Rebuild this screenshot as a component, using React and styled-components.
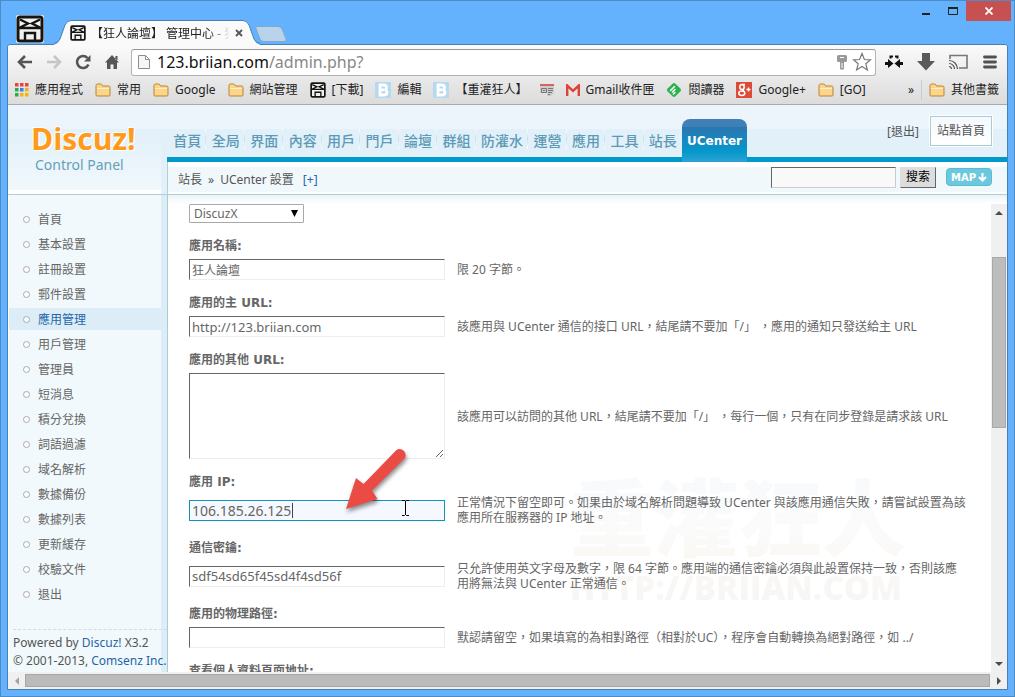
import styled, { createGlobalStyle } from "styled-components";

const GlobalStyle = createGlobalStyle`
  *, *::before, *::after {
    box-sizing: border-box;
  }
  body {
    margin: 0;
    font-family: "Noto Sans", "Noto Sans CJK TC", sans-serif;
    font-size: 12px;
    color: #555;
  }
  button, input, select, textarea {
    font: inherit;
    color: inherit;
    margin: 0;
  }
  a {
    color: inherit;
    text-decoration: none;
  }
`;

/* ---------- window ---------- */

const Window = styled.div`
  position: relative;
  height: 100vh;
  display: flex;
  flex-direction: column;
  background: #64b1fd;
  border: 1px solid #4c8bc4;
  overflow: hidden;
`;

const TitleBar = styled.div`
  flex: 0 0 43px;
  display: flex;
  align-items: flex-end;
  padding: 0 3px 0 15px;
`;

const Profile = styled.button`
  width: 28px;
  height: 28px;
  margin-bottom: 1px;
  padding: 0;
  border: none;
  background: none;
  & svg {
    display: block;
  }
`;

const Tab = styled.div`
  position: relative;
  z-index: 1;
  width: 206px;
  height: 25px;
  margin: 0 0 -1px 10px;
  padding: 0 17px 0 16px;
  display: flex;
  align-items: center;
  gap: 5px;
  color: #222;
  & > * {
    position: relative;
    flex-shrink: 0;
  }
`;

const TabShape = styled.svg`
  && {
    position: absolute;
  }
  left: 0;
  top: 0;
`;

const TabTitle = styled.span`
  && {
    flex: 1 1 0;
  }
  overflow: hidden;
  white-space: nowrap;
  mask-image: linear-gradient(to right, #000 85%, transparent);
`;

const PlainButton = styled.button`
  display: flex;
  align-items: center;
  justify-content: center;
  padding: 0;
  border: none;
  background: none;
`;

const NewTab = styled(PlainButton)`
  margin: 0 0 2px -5px;
`;

const WindowButtons = styled.div`
  margin-left: auto;
  align-self: flex-start;
  display: flex;
`;

const WindowButton = styled(PlainButton)`
  width: ${({ $close }) => ($close ? 45 : 27)}px;
  height: 20px;
  background: ${({ $close }) => ($close ? "#c75050" : "none")};
`;

const Browser = styled.div`
  flex: 1;
  min-height: 0;
  margin: 0 6px 6px;
  display: flex;
  flex-direction: column;
  border: 1px solid #4781b0;
  border-radius: 3px 3px 0 0;
  background: #fff;
`;

/* ---------- toolbar ---------- */

const Toolbar = styled.div`
  flex: 0 0 34px;
  display: flex;
  align-items: center;
  padding: 0 7px 0 8px;
  background: linear-gradient(#fafafa, #e9e9e9);
  border-radius: 3px 3px 0 0;
`;

const NavButtons = styled.div`
  display: flex;
  gap: 11px;
  margin-right: 10px;
`;

const IconButton = styled(PlainButton)`
  width: 18px;
  height: 20px;
`;

const Address = styled.label`
  flex: 1;
  height: 27px;
  display: flex;
  align-items: center;
  gap: 5px;
  padding: 0 3px 0 6px;
  background: #fff;
  border: 1px solid #b3b3b3;
  border-top-color: #999;
  border-radius: 3px;
`;

const AddressText = styled.span`
  flex: 1;
  margin-left: 2px;
  font-size: 16px;
  line-height: 24px;
  color: #888;
  & b {
    font-weight: 400;
    color: #111;
  }
`;

const Extensions = styled.div`
  display: flex;
  gap: 12px;
  margin-left: 8px;
`;

const ExtensionButton = styled(PlainButton)`
  width: 20px;
  height: 22px;
`;

const Bookmarks = styled.div`
  flex: 0 0 26px;
  display: flex;
  align-items: center;
  gap: 12px;
  padding: 0 8px 4px 7px;
  white-space: nowrap;
  background: linear-gradient(#e8e8e8, #dcdcdc);
  border-bottom: 1px solid #a9a9a9;
  color: #222;
`;

const Bookmark = styled.a`
  display: flex;
  align-items: center;
  gap: 6px;
  line-height: 16px;
`;

const BookmarkEnd = styled.div`
  margin-left: auto;
  display: flex;
  align-items: center;
  gap: 7px;
`;

const Divider = styled.span`
  width: 1px;
  height: 20px;
  background: #c4cdd6;
`;

/* ---------- page header ---------- */

const Header = styled.header`
  flex: 0 0 90px;
  display: flex;
  background: linear-gradient(#edf5fc 24px, #e2f0fa 24px);
  border-bottom: 1px solid #b1cfd6;
`;

const Logo = styled.a`
  flex: 0 0 153px;
  display: flex;
  flex-direction: column;
  padding: 16px 0 0 23px;
  background: linear-gradient(#edf5fc 24px, #e2f0fa 24px, #f0f8fc 85px, #fff 85px);
`;

const LogoName = styled.span`
  font-family: "Open Sans", sans-serif;
  font-size: 30px;
  font-weight: 700;
  line-height: 36px;
  color: #ff9a1a;
  text-shadow: 1px 1px 0 #fff, -1px -1px 0 #fff;
`;

const LogoCaption = styled.span`
  padding-left: 4px;
  font-size: 14px;
  line-height: 16px;
  color: #669fb8;
`;

const HeaderMain = styled.div`
  flex: 1;
  min-width: 0;
  display: flex;
  flex-direction: column;
`;

const NavRow = styled.div`
  flex: 0 0 57px;
  display: flex;
  align-items: flex-end;
  margin-left: 6px;
  border-bottom: 5px solid #0099cc;
`;

const NavList = styled.nav`
  flex: 0 1 514px;
  display: flex;
  margin-left: 1px;
`;

const NavLink = styled.a`
  flex: 1 0 auto;
  height: 25px;
  margin-bottom: 3px;
  text-align: center;
  font-size: 14px;
  line-height: 23px;
  font-weight: 500;
  color: #5c9ab5;
  background: linear-gradient(#fff, #c9dfeb, #fff) right 0 top 0 / 1px 20px no-repeat;
  &:last-child {
    background: none;
  }
`;

const CurrentTab = styled.a`
  width: 65px;
  height: 43px;
  margin-bottom: -5px;
  text-align: center;
  font-family: "DejaVu Sans", sans-serif;
  font-weight: 700;
  line-height: 45px;
  color: #fff;
  border-radius: 8px 8px 0 0;
  background: linear-gradient(#3f80b8 8px, #2b76b0 8px, #0597cb 32px, #2ca4d3);
`;

const Account = styled.div`
  align-self: flex-start;
  margin: 11px 15px 0 auto;
  display: flex;
  align-items: center;
  gap: 11px;
`;

const SiteLink = styled.a`
  padding: 0 6px;
  line-height: 28px;
  border: 1px solid #a9ccd6;
  background: linear-gradient(#f4f9fd, #fff);
  outline: 1px solid #fff;
`;

const CrumbBar = styled.div`
  flex: 1;
  margin-left: 6px;
  display: flex;
  align-items: center;
  padding: 0 15px 2px 10px;
  border-left: 1px solid #b1cfd6;
  background: linear-gradient(#fff 5px, #f1f8fc 5px, #f1f8fc 30px, #fff 30px);
`;

const Crumbs = styled.span`
  flex: 1;
  display: flex;
  gap: 6px;
  padding-top: 6px;
  line-height: 16px;
  & a {
    margin-left: 3px;
    color: #2366a8;
  }
`;

const SearchInput = styled.input`
  width: 125px;
  height: 21px;
  margin-right: 4px;
  border: 1px solid;
  border-color: #666 #ccc #ccc #666;
  background: #f9f9f9;
`;

const SearchButton = styled.button`
  height: 21px;
  padding: 0 5px;
  margin-right: 10px;
  line-height: 18px;
  color: #000;
  background: #ddd;
  border: 1px solid;
  border-color: #ddd #666 #666 #ddd;
`;

const MapButton = styled.button`
  height: 18px;
  width: 46px;
  padding: 0;
  display: flex;
  align-items: center;
  justify-content: center;
  gap: 2px;
  font-family: "DejaVu Sans", sans-serif;
  font-size: 10px;
  font-weight: 700;
  color: #fff;
  background: #6cc8dc;
  border: 1px solid #58bcd2;
  border-radius: 4px;
`;

/* ---------- page body ---------- */

const Body = styled.div`
  flex: 1;
  min-height: 0;
  display: flex;
`;

const Sidebar = styled.aside`
  flex: 0 0 160px;
  overflow: hidden;
  white-space: nowrap;
  padding-top: 13px;
  border-left: 1px solid #fff;
  border-right: 1px solid #a9ced2;
  background: linear-gradient(to right, #f1f9fc 152px, #dcedf8 152px);
`;

const MenuLink = styled.a`
  display: flex;
  align-items: center;
  gap: 8px;
  height: 22px;
  margin-bottom: 3px;
  padding-left: 14px;
  color: ${({ $active }) => ($active ? "#2366a8" : "#666")};
  background: ${({ $active }) => ($active ? "#dcedf8" : "none")};
  &::before {
    content: "";
    width: 7px;
    height: 7px;
    border: 1px solid #aaa;
    border-radius: 50%;
    background: #fff;
  }
`;

const Copyright = styled.footer`
  margin: 24px 0 0 4px;
  padding-top: 4px;
  line-height: 18px;
  color: #555;
  border-top: 1px dashed #d3dbdf;
  & p {
    margin: 0;
  }
  & a {
    color: #2366a8;
  }
`;

const Main = styled.main`
  position: relative;
  flex: 1;
  min-width: 0;
  display: flex;
  flex-direction: column;
  padding-top: 9px;
  background: linear-gradient(#eaf4f9, #fff 9px);
`;

const Frame = styled.div`
  position: relative;
  flex: 1;
  min-height: 0;
  display: flex;
`;

const Form = styled.form`
  position: relative;
  z-index: 1;
  flex: 1;
  min-width: 0;
  overflow: hidden;
  padding-left: 21px;
`;

const AppType = styled.select`
  display: block;
  width: 115px;
  height: 19px;
  padding: 0 4px;
  line-height: 16px;
  color: #666;
  appearance: none;
  border: 1px solid #a9a9a9;
  border-radius: 1px;
  background: #fff;
`;

const SelectBox = styled.div`
  position: relative;
  width: 115px;
  & svg {
    position: absolute;
    right: 6px;
    top: 6px;
    pointer-events: none;
  }
`;

const FieldLabel = styled.label`
  display: block;
  padding: 15px 0 5px;
  line-height: 16px;
  font-family: "DejaVu Sans", "Noto Sans CJK TC", sans-serif;
  font-weight: 700;
  color: #666;
`;

const FieldRow = styled.div`
  display: flex;
  align-items: center;
  gap: 12px;
`;

const TextInput = styled.input`
  flex: 0 0 256px;
  width: 256px;
  height: 21px;
  padding: 0 2px;
  font-size: ${({ $size }) => $size}px;
  color: #666;
  border: 1px solid;
  border-color: #666 #ededed #ededed #666;
  background: #fff;
  outline: none;
`;

const FocusedInput = styled(TextInput)`
  border-color: #0f93c0;
  background: #f5f9ff;
`;

const TextBox = styled.textarea`
  flex: 0 0 256px;
  width: 256px;
  height: 86px;
  display: block;
  border: 1px solid;
  border-color: #666 #ededed #ededed #666;
  outline: none;
`;

const Hint = styled.p`
  margin: 0;
  line-height: 15px;
  white-space: pre-line;
  color: #666;
`;

const Watermark = styled.div`
  position: absolute;
  left: 402px;
  top: 264px;
  display: flex;
  flex-direction: column;
  pointer-events: none;
  font-weight: 900;
  white-space: nowrap;
  color: transparent;
  background: linear-gradient(#f7f9fc, #fbfbfb 45%, #fbf8f3 65%, #f6f6f6);
  background-clip: text;
  & b {
    font-size: 84px;
    line-height: 100px;
    font-weight: 900;
  }
  & i {
    font-family: "Open Sans", sans-serif;
    font-style: normal;
    font-weight: 800;
    font-size: 33px;
    line-height: 40px;
  }
`;

/* ---------- scrollbars ---------- */

const ScrollBar = styled.div`
  flex: 0 0 ${({ $vertical }) => ($vertical ? 16 : 17)}px;
  display: flex;
  flex-direction: ${({ $vertical }) => ($vertical ? "column" : "row")};
  background: #f0f0f0;
  & svg {
    display: block;
  }
`;

const ScrollArrow = styled(PlainButton)`
  flex: 0 0 17px;
`;

const VerticalTrack = styled.div`
  flex: 1;
  padding: 36px 0 0 1px;
`;

const VerticalThumb = styled.div`
  height: 43%;
  margin-right: 1px;
  background: #bdbdbd;
  border: 1px solid #a8a8a8;
`;

const HorizontalThumb = styled.div`
  flex: 1;
  margin: 2px 0;
  background: #bbb;
  border: 1px solid #a6a6a6;
`;

/* ---------- overlays ---------- */

const RedArrow = styled.svg`
  position: absolute;
  z-index: 2;
  left: 336px;
  top: 438px;
  pointer-events: none;
  filter: drop-shadow(1px 3px 2px rgba(0, 0, 0, 0.45));
`;

const Pointer = styled.svg`
  position: absolute;
  z-index: 2;
  left: 400px;
  top: 498px;
  pointer-events: none;
`;

const Caret = styled.span`
  position: absolute;
  left: 103px;
  top: 3px;
  width: 1px;
  height: 15px;
  background: #444;
`;

const CaretBox = styled.div`
  position: relative;
  display: flex;
`;

/* ---------- icons ---------- */

function FaceIcon({ size = 16 }) {
  return (
    <svg width={size} height={size} viewBox="0 0 28 28">
      <rect width="28" height="28" rx="2" fill="#f3f1ee" />
      <rect x="2" y="2" width="24" height="24" rx="2" fill="none" stroke="#151515" strokeWidth="3" />
      <path
        d="M4 4.500L12 8.500L4 12.500M24 4.500L16 8.500L24 12.500M3 13H25M9 26V18H19V26"
        fill="none"
        stroke="#151515"
        strokeWidth="2.400"
      />
    </svg>
  );
}

function FolderIcon() {
  return (
    <svg width="16" height="14" viewBox="0 0 16 14">
      <path
        d="M1 12V2.500Q1 1 2.500 1H5.500Q6.500 1 7 2L7.500 3H13.500Q15 3 15 4.500V12Q15 13 14 13H2Q1 13 1 12Z"
        fill="#fcd58a"
        stroke="#b98532"
      />
      <path d="M2 5.500H14" stroke="#fff0c8" />
    </svg>
  );
}

function AppsIcon() {
  const colors = ["#e8453c", "#e8453c", "#e8453c", "#2da94f", "#3a7cec", "#f2b50f", "#2da94f", "#f2b50f", "#f2b50f"];
  return (
    <svg width="14" height="14" viewBox="0 0 14 14">
      {colors.map((color, i) => (
        <rect key={i} x={(i % 3) * 5} y={Math.floor(i / 3) * 5} width="3.500" height="3.500" fill={color} />
      ))}
    </svg>
  );
}

function BlogIcon() {
  return (
    <svg width="16" height="16" viewBox="0 0 16 16">
      <rect width="16" height="16" fill="#b5daf0" />
      <path
        d="M5 3H8.500Q11.500 3 11.500 5.500Q11.500 7.500 9.500 7.800Q12 8 12 10.500Q12 13 8.500 13H5ZM5 7.800H9"
        fill="none"
        stroke="#fff"
        strokeWidth="2.800"
      />
    </svg>
  );
}

function NewsIcon() {
  return (
    <svg width="14" height="12" viewBox="0 0 14 12">
      <path d="M0 0H14V9L11 12H7V9H0Z" fill="#ccc" />
      <path d="M0 1H14" stroke="#d9413c" strokeWidth="1.500" />
      <path d="M1.500 4.500H6.500V8.500H1.500ZM3 6.500H5M8 4.500H13M8 6.500H13M8 8.500H12M8 10.500H10" fill="none" stroke="#777" />
    </svg>
  );
}

function GmailIcon() {
  return (
    <svg width="14" height="12" viewBox="0 0 14 12">
      <rect width="14" height="12" rx="1" fill="#e6e3e0" />
      <path d="M1.200 12V1.500L7 6.800L12.800 1.500V12" fill="none" stroke="#dc4437" strokeWidth="2.400" />
    </svg>
  );
}

function ReaderIcon() {
  return (
    <svg width="16" height="16" viewBox="0 0 16 16">
      <rect x="2.500" y="2.500" width="11" height="11" rx="2" transform="rotate(45 8 8)" fill="#2bb24c" />
      <path d="M4.500 8.500L8.500 4.500M6.500 10L9 7.500M7.500 12L9 10.500" stroke="#fff" strokeWidth="1.500" strokeLinecap="round" />
    </svg>
  );
}

function GPlusIcon() {
  return (
    <svg width="16" height="16" viewBox="0 0 16 16">
      <rect width="16" height="16" fill="#dc4a38" />
      <ellipse cx="6" cy="5" rx="2.200" ry="2.500" fill="none" stroke="#fff" strokeWidth="1.500" />
      <ellipse cx="5.800" cy="11.300" rx="3" ry="2.200" fill="none" stroke="#fff" strokeWidth="1.500" />
      <path d="M6 2.500H9M6.500 7.500L8 9.500M10.500 7.500H14.500M12.500 5.500V9.500" stroke="#fff" strokeWidth="1.400" />
    </svg>
  );
}

function Triangle({ dir, color = "#4c4c4c" }) {
  const shapes = {
    up: "M0 6L4 2L8 6Z",
    down: "M0 2L4 6L8 2Z",
    left: "M6 0L2 4L6 8Z",
    right: "M2 0L6 4L2 8Z",
  };
  return (
    <svg width="8" height="8" viewBox="0 0 8 8">
      <path d={shapes[dir]} fill={color} />
    </svg>
  );
}

/* ---------- data ---------- */

const bookmarks = [
  { icon: <AppsIcon />, text: "應用程式" },
  { icon: <FolderIcon />, text: "常用" },
  { icon: <FolderIcon />, text: "Google" },
  { icon: <FolderIcon />, text: "網站管理" },
  { icon: <FaceIcon />, text: "[下載]" },
  { icon: <BlogIcon />, text: "編輯" },
  { icon: <BlogIcon />, text: "【重灌狂人】" },
  { icon: <NewsIcon /> },
  { icon: <GmailIcon />, text: "Gmail收件匣" },
  { icon: <ReaderIcon />, text: "閱讀器" },
  { icon: <GPlusIcon />, text: "Google+" },
  { icon: <FolderIcon />, text: "[GO]" },
];

const navItems = ["首頁", "全局", "界面", "內容", "用戶", "門戶", "論壇", "群組", "防灌水", "運營", "應用", "工具", "站長"];

const menuItems = [
  "首頁",
  "基本設置",
  "註冊設置",
  "郵件設置",
  "應用管理",
  "用戶管理",
  "管理員",
  "短消息",
  "積分兌換",
  "詞語過濾",
  "域名解析",
  "數據備份",
  "數據列表",
  "更新緩存",
  "校驗文件",
  "退出",
];

function Field({ id, label, hint, children }) {
  return (
    <>
      <FieldLabel htmlFor={id}>{label}</FieldLabel>
      <FieldRow>
        {children}
        {hint && <Hint>{hint}</Hint>}
      </FieldRow>
    </>
  );
}

function BrowserTitle() {
  return (
    <TitleBar>
      <Profile aria-label="Profile">
        <FaceIcon size={28} />
      </Profile>
      <Tab>
        <TabShape width="206" height="25" viewBox="0 0 206 25">
          <path
            d="M0 24.500Q4 24 6 19L11 5Q13 0.500 17 0.500H189Q193 0.500 195 5L200 19Q202 24 206 24.500V25H0Z"
            fill="#fafafa"
          />
          <path
            d="M0 23.500Q4 23 6 19L11 5Q13 0.500 17 0.500H189Q193 0.500 195 5L200 19Q202 23 206 23.500"
            fill="none"
            stroke="#4781b0"
          />
        </TabShape>
        <FaceIcon />
        <TabTitle>【狂人論壇】 管理中心 - 狂</TabTitle>
        <PlainButton aria-label="Close tab">
          <svg width="8" height="8" viewBox="0 0 8 8">
            <path d="M1 1L7 7M7 1L1 7" stroke="#555" strokeWidth="1.800" />
          </svg>
        </PlainButton>
      </Tab>
      <NewTab aria-label="New tab">
        <svg width="32" height="16" viewBox="0 0 32 16">
          <path
            d="M2 0.500H23Q26 0.500 27 3L31 13Q32 15.500 29 15.500H9Q6 15.500 5 13L1 2.500Q0.500 0.500 2 0.500Z"
            fill="#b9d3ea"
            stroke="#7fa9cd"
          />
        </svg>
      </NewTab>
      <WindowButtons>
        <WindowButton aria-label="Minimize">
          <svg width="8" height="10">
            <path d="M0 8H8" stroke="#222" strokeWidth="2" />
          </svg>
        </WindowButton>
        <WindowButton aria-label="Maximize">
          <svg width="10" height="8">
            <path d="M0 1H10" stroke="#222" strokeWidth="2" />
            <path d="M0.500 0V7.500H9.500V0" fill="none" stroke="#222" />
          </svg>
        </WindowButton>
        <WindowButton $close aria-label="Close">
          <svg width="8" height="8">
            <path d="M0.500 0.500L7.500 7.500M7.500 0.500L0.500 7.500" stroke="#fff" strokeWidth="1.800" />
          </svg>
        </WindowButton>
      </WindowButtons>
    </TitleBar>
  );
}

function BrowserToolbar() {
  return (
    <Toolbar>
      <NavButtons>
        <IconButton aria-label="Back">
          <svg width="16" height="14" viewBox="0 0 16 14">
            <path d="M2 7H15M8 1L2 7L8 13" fill="none" stroke="#555" strokeWidth="2.600" />
          </svg>
        </IconButton>
        <IconButton aria-label="Forward">
          <svg width="16" height="14" viewBox="0 0 16 14">
            <path d="M1 7H14M8 1L14 7L8 13" fill="none" stroke="#c6c6c6" strokeWidth="2.600" />
          </svg>
        </IconButton>
        <IconButton aria-label="Reload">
          <svg width="16" height="16" viewBox="0 0 16 16">
            <path d="M12.500 4A6 6 0 1 0 13.500 10.500" fill="none" stroke="#555" strokeWidth="2.600" />
            <path d="M15.500 1V7.500H9Z" fill="#555" />
          </svg>
        </IconButton>
        <IconButton aria-label="Home">
          <svg width="16" height="16" viewBox="0 0 16 16">
            <path d="M8 1L1 8.500H15Z M11.500 2H13.500V6H11.500Z" fill="#555" />
            <path d="M3 8H13V15H9.500V10.500H6.500V15H3Z" fill="#555" />
          </svg>
        </IconButton>
      </NavButtons>
      <Address>
        <svg width="12" height="16" viewBox="0 0 12 16">
          <path d="M0.500 1.500H7.500L11.500 5.500V14.500H0.500ZM7.500 1.500V5.500H11.500" fill="#f6f6f6" stroke="#8d8d8d" />
        </svg>
        <AddressText>
          <b>123.briian.com</b>/admin.php?
        </AddressText>
        <svg width="10" height="15" viewBox="0 0 10 15">
          <path d="M0 1.500Q0 0 1.500 0H8.500Q10 0 10 1.500V5.500Q10 7 8.500 7H7V14Q5 15.500 3 14V7H1.500Q0 7 0 5.500Z" fill="#999" />
          <path d="M3 2.500H7M5 8V13" stroke="#fff" />
        </svg>
        <svg width="20" height="20" viewBox="0 0 20 20">
          <path
            d="M10 1.500L12.400 7.500L18.500 7.800L13.800 11.800L15.400 18L10 14.500L4.600 18L6.200 11.800L1.500 7.800L7.600 7.500Z"
            fill="#fff"
            stroke="#777"
            strokeWidth="1.200"
          />
        </svg>
      </Address>
      <Extensions>
        <ExtensionButton aria-label="Extension">
          <svg width="20" height="14" viewBox="0 0 20 14">
            <path d="M1 7H4V4L9.500 8.500L4 13V10H1ZM19 7H16V4L10.500 8.500L16 13V10H19Z" fill="#111" />
            <path d="M6.500 3.500V1.500H9M11 1.500H13.500V3.500" fill="none" stroke="#111" strokeWidth="2" />
          </svg>
        </ExtensionButton>
        <ExtensionButton aria-label="Downloads">
          <svg width="18" height="18" viewBox="0 0 18 18">
            <path d="M5 0H13V8H18L9 17.500L0 8H5Z" fill="#5a5a5a" />
          </svg>
        </ExtensionButton>
        <ExtensionButton aria-label="Cast">
          <svg width="20" height="16" viewBox="0 0 20 16">
            <path d="M2 5V1.500H19V14H11" fill="none" stroke="#777" strokeWidth="1.600" />
            <path d="M1 9.500A5.500 5.500 0 0 1 6.500 15M1 12.500A2.500 2.500 0 0 1 3.500 15M1 6.500A8.500 8.500 0 0 1 9.500 15" fill="none" stroke="#555" strokeWidth="1.200" />
          </svg>
        </ExtensionButton>
        <ExtensionButton aria-label="Menu">
          <svg width="14" height="14" viewBox="0 0 14 14">
            <path d="M1.500 2H12.500M1.500 7H12.500M1.500 12H12.500" stroke="#505050" strokeWidth="2.800" strokeLinecap="round" />
          </svg>
        </ExtensionButton>
      </Extensions>
    </Toolbar>
  );
}

function BookmarkBar() {
  return (
    <Bookmarks>
      {bookmarks.map(({ icon, text }, i) => (
        <Bookmark key={i} href="#">
          {icon}
          {text}
        </Bookmark>
      ))}
      <BookmarkEnd>
        <span>»</span>
        <Divider />
        <Bookmark href="#">
          <FolderIcon />
          其他書籤
        </Bookmark>
      </BookmarkEnd>
    </Bookmarks>
  );
}

function PageHeader() {
  return (
    <Header>
      <Logo href="#">
        <LogoName>Discuz!</LogoName>
        <LogoCaption>Control Panel</LogoCaption>
      </Logo>
      <HeaderMain>
        <NavRow>
          <NavList>
            {navItems.map((item) => (
              <NavLink key={item} href="#">
                {item}
              </NavLink>
            ))}
          </NavList>
          <CurrentTab href="#">UCenter</CurrentTab>
          <Account>
            <a href="#">[退出]</a>
            <SiteLink href="#">站點首頁</SiteLink>
          </Account>
        </NavRow>
        <CrumbBar>
          <Crumbs>
            <span>站長</span>
            <span>»</span>
            <span>UCenter 設置</span>
            <a href="#">[+]</a>
          </Crumbs>
          <SearchInput aria-label="搜索" />
          <SearchButton>搜索</SearchButton>
          <MapButton>
            MAP
            <svg width="9" height="9" viewBox="0 0 9 9">
              <path d="M4.500 0V7M1 4L4.500 7.500L8 4" fill="none" stroke="#fff" strokeWidth="2" />
            </svg>
          </MapButton>
        </CrumbBar>
      </HeaderMain>
    </Header>
  );
}

function PageMenu() {
  return (
    <Sidebar>
      {menuItems.map((item) => (
        <MenuLink key={item} href="#" $active={item === "應用管理"}>
          {item}
        </MenuLink>
      ))}
      <Copyright>
        <p>
          Powered by <a href="#">Discuz!</a> X3.2
        </p>
        <p>
          © 2001-2013, <a href="#">Comsenz Inc.</a>
        </p>
      </Copyright>
    </Sidebar>
  );
}

function AppForm() {
  return (
    <Form>
      <SelectBox>
        <AppType aria-label="DiscuzX" defaultValue="DiscuzX">
          <option>DiscuzX</option>
        </AppType>
        <svg width="7" height="7" viewBox="0 0 7 7">
          <path d="M0 0H7L3.500 7Z" fill="#000" />
        </svg>
      </SelectBox>
      <Field id="name" label="應用名稱:" hint="限 20 字節。">
        <TextInput id="name" $size={12} defaultValue="狂人論壇" />
      </Field>
      <Field
        id="url"
        label="應用的主 URL:"
        hint="該應用與 UCenter 通信的接口 URL，結尾請不要加「/」 ，應用的通知只發送給主 URL"
      >
        <TextInput id="url" $size={13} defaultValue="http://123.briian.com" />
      </Field>
      <Field
        id="extraurl"
        label="應用的其他 URL:"
        hint="該應用可以訪問的其他 URL，結尾請不要加「/」 ，每行一個，只有在同步登錄是請求該 URL"
      >
        <TextBox id="extraurl" />
      </Field>
      <Field
        id="ip"
        label="應用 IP:"
        hint={
          "正常情況下留空即可。如果由於域名解析問題導致 UCenter 與該應用通信失敗，請嘗試設置為該\n應用所在服務器的 IP 地址。"
        }
      >
        <CaretBox>
          <FocusedInput id="ip" $size={14} defaultValue="106.185.26.125" />
          <Caret />
        </CaretBox>
      </Field>
      <Field
        id="authkey"
        label="通信密鑰:"
        hint={
          "只允許使用英文字母及數字，限 64 字節。應用端的通信密鑰必須與此設置保持一致，否則該應\n用將無法與 UCenter 正常通信。"
        }
      >
        <TextInput id="authkey" $size={13} defaultValue="sdf54sd65f45sd4f4sd56f" />
      </Field>
      <Field
        id="path"
        label="應用的物理路徑:"
        hint="默認請留空，如果填寫的為相對路徑（相對於UC），程序會自動轉換為絕對路徑，如 ../"
      >
        <TextInput id="path" $size={13} />
      </Field>
      <Field id="viewpro" label="查看個人資料頁面地址:">
        <TextInput id="viewpro" $size={13} />
      </Field>
    </Form>
  );
}

function App() {
  return (
    <>
      <GlobalStyle />
      <Window>
        <BrowserTitle />
        <Browser>
          <BrowserToolbar />
          <BookmarkBar />
          <PageHeader />
          <Body>
            <PageMenu />
            <Main>
              <Frame>
                <Watermark aria-hidden="true">
                  <b>重灌狂人</b>
                  <i>HTTP://BRIIAN.COM</i>
                </Watermark>
                <AppForm />
                <ScrollBar $vertical>
                  <ScrollArrow aria-label="Scroll up">
                    <Triangle dir="up" />
                  </ScrollArrow>
                  <VerticalTrack>
                    <VerticalThumb />
                  </VerticalTrack>
                  <ScrollArrow aria-label="Scroll down">
                    <Triangle dir="down" />
                  </ScrollArrow>
                </ScrollBar>
              </Frame>
            </Main>
          </Body>
          <ScrollBar>
            <ScrollArrow aria-label="Scroll left">
              <Triangle dir="left" color="#a3a3a3" />
            </ScrollArrow>
            <HorizontalThumb />
            <ScrollArrow aria-label="Scroll right">
              <Triangle dir="right" />
            </ScrollArrow>
          </ScrollBar>
        </Browser>
        <RedArrow width="76" height="80" viewBox="0 0 76 80">
          <path
            d="M9 70L19 39L26.500 45L59 11.500Q63 8.500 67 12Q70 16 67.500 19.500L35 51.500L40.500 60Z"
            fill="#ea4c45"
          />
        </RedArrow>
        <Pointer width="9" height="18" viewBox="0 0 9 18">
          <path d="M1 1.500H3.500L4.500 2.500L5.500 1.500H8M4.500 2V16M1 16.500H3.500L4.500 15.500L5.500 16.500H8" fill="none" stroke="#000" />
        </Pointer>
      </Window>
    </>
  );
}

export default App;
